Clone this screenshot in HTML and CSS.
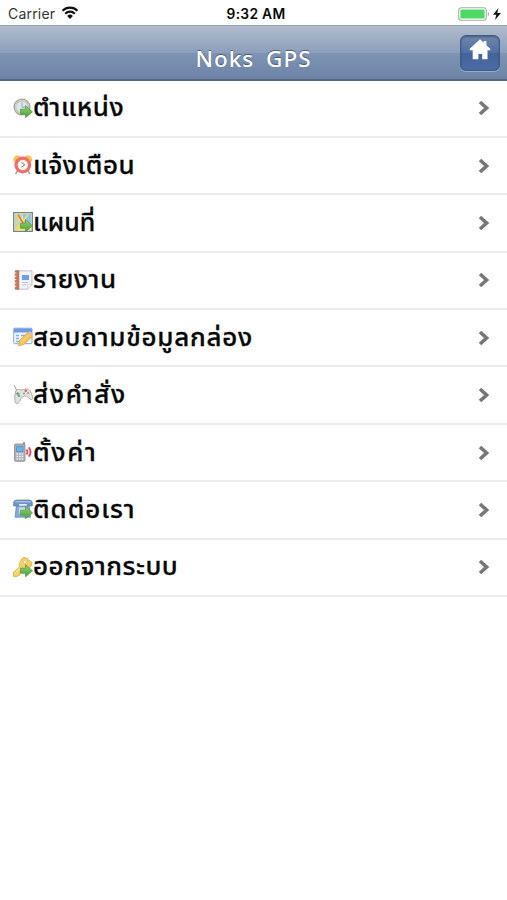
FILE: index.html
```html
<!DOCTYPE html>
<html lang="th">

<head>
    <meta charset="UTF-8" />
    <meta name="viewport" content="width=device-width, initial-scale=1.0" />
    <title>Noks GPS</title>
    <link rel="stylesheet" href="styles.css">
</head>

<body>
    <!-- Green arrow shared by several icons -->
    <svg class="defs" width="0" height="0">
        <defs>
            <linearGradient id="green" x1="0" y1="0" x2="0" y2="1">
                <stop offset="0" stop-color="#91d36f" />
                <stop offset="1" stop-color="#49a13d" />
            </linearGradient>
            <path id="arrow" d="M7.5 11.2h5V7.5l7 6.3-7 6v-3.5h-5z" fill="url(#green)" stroke="#55943d" stroke-width=".7" />
        </defs>
    </svg>

    <div class="status-bar">
        <div class="carrier">
            <span>Carrier</span>
            <svg width="18" height="14" viewBox="0 0 18 14">
                <path d="M1.5 4.8a10.6 10.6 0 0 1 15 0M4.2 7.7a6.8 6.8 0 0 1 9.6 0" fill="none" stroke="#111" stroke-width="2.2" />
                <path d="M9 13L6.1 9.9a4.2 4.2 0 0 1 5.8 0z" fill="#111" />
            </svg>
        </div>
        <span class="time">9:32 AM</span>
        <div class="power">
            <svg width="44" height="14" viewBox="0 0 44 14">
                <rect x=".7" y=".7" width="27.6" height="12.6" rx="2.8" fill="#fff" stroke="#aaa" stroke-width="1.1" />
                <rect x="2.4" y="2.4" width="24.2" height="9.2" rx="1.3" fill="#4cd964" />
                <path d="M29.8 4.7c1.7.8 1.7 3.8 0 4.6z" fill="#aaa" />
                <path d="M40.5 1L35 7.7h3.3L37 13l6-7h-3.7z" fill="#111" />
            </svg>
        </div>
    </div>

    <header class="toolbar">
        <h1>Noks GPS</h1>
        <a href="#" class="home-btn" aria-label="Home">
            <svg width="22" height="22" viewBox="0 0 22 22">
                <path d="M11 .3l3.8 3.5V2h2.6v4.2l3.8 3.5v1.5h-2.7v9H13.2V15H9.4v5.2H3.7v-9H.8V9.7z" fill="#fff" />
            </svg>
        </a>
    </header>

    <ul class="menu">
        <li><a href="#">
            <svg class="icon" viewBox="0 0 20 20">
                <circle cx="9" cy="9" r="7.9" fill="#eaf0f6" stroke="#a2a4b5" stroke-width="1.4" />
                <circle cx="9" cy="9" r="6.3" fill="#d8e7f4" stroke="#d6c18d" stroke-width="1.2" />
                <path d="M9 4v5.2h4" fill="none" stroke="#9eabba" />
                <use href="#arrow" />
            </svg>
            <span class="label">ตำแหน่ง</span>
            <svg class="chevron" viewBox="0 0 12 16"><path d="M2 2l6.6 6L2 14" /></svg>
        </a></li>
        <li><a href="#">
            <svg class="icon" viewBox="0 0 20 20">
                <path d="M4.5 16l-2 3M15 16l2 3" stroke="#a5a0a0" stroke-width="1.5" />
                <path d="M.7 5.2C.8 1 4 0 7 1.3L2 7zM19 5.2C18.8 1 15.5 0 12.6 1.3L17.6 7z" fill="#fcc54b" stroke="#efaa55" stroke-width=".6" />
                <circle cx="9.8" cy="10" r="6.8" fill="#fff5ef" stroke="#ee6f68" stroke-width="3.3" />
                <path d="M8.5 7.5l3.3 2.3-3.3 2.5" fill="none" stroke="#777" />
            </svg>
            <span class="label">แจ้งเตือน</span>
            <svg class="chevron" viewBox="0 0 12 16"><path d="M2 2l6.6 6L2 14" /></svg>
        </a></li>
        <li><a href="#">
            <svg class="icon" viewBox="0 0 20 20">
                <path d="M.7.7h18.6v18.6H.7z" fill="#eef1d8" stroke="#778578" stroke-width="1.3" />
                <path d="M2 2h8l-2 8-6 8z" fill="#c2d7b5" />
                <path d="M10 2h8v11h-8z" fill="#8dc5ee" />
                <path d="M2 18l7-8 9 8z" fill="#f4df76" />
                <path d="M4 2.5l5.5 9M15 3L3 17.5" stroke="#f5d85d" stroke-width="2" />
                <path d="M5 2.5l5 8.5" stroke="#ed7645" stroke-width="1.5" />
                <use href="#arrow" />
            </svg>
            <span class="label">แผนที่</span>
            <svg class="chevron" viewBox="0 0 12 16"><path d="M2 2l6.6 6L2 14" /></svg>
        </a></li>
        <li><a href="#">
            <svg class="icon" viewBox="0 0 20 20">
                <path d="M4 .8h15v13.7l-4.5 4.7H4z" fill="#f0f3fa" stroke="#bfc1cc" />
                <path d="M2.2.7h3.6v18.6H2.2z" fill="#c87755" stroke="#a86851" stroke-width=".7" />
                <path d="M1.3 3h2M1.3 6.3h2M1.3 9.6h2M1.3 13h2M1.3 16.3h2" stroke="#eee" />
                <path d="M9 5h7v5H9z" fill="#6f9ee2" />
                <path d="M9 12.5h6M9 15h4" stroke="#b9c7e2" />
                <path d="M14.5 19v-4.5H19z" fill="#fff" stroke="#c5c5cc" stroke-width=".7" />
            </svg>
            <span class="label">รายงาน</span>
            <svg class="chevron" viewBox="0 0 12 16"><path d="M2 2l6.6 6L2 14" /></svg>
        </a></li>
        <li><a href="#">
            <svg class="icon" viewBox="0 0 20 20">
                <rect x=".7" y="1.2" width="18.3" height="15.5" rx="1" fill="#edf5ff" stroke="#86abd9" />
                <path d="M1 1.5h18v4H1z" fill="#6d9be0" />
                <path d="M3 8.5h3M8 8.5h7M3 11.5h3M8 11.5h5M3 14.5h3" stroke="#86b1e5" stroke-width="1.5" />
                <path d="M5.5 18.8l1.2-5.6 8.3-7.7 4.2 4.2-8.4 7.8z" fill="#f8c551" stroke="#d79844" stroke-width=".7" />
                <path d="M15 5.5l1.6-1.2 3.2 3.2-.6 2.2z" fill="#e9b8a1" />
                <path d="M8.5 15l8-7.3" stroke="#ffe38b" />
            </svg>
            <span class="label">สอบถามข้อมูลกล่อง</span>
            <svg class="chevron" viewBox="0 0 12 16"><path d="M2 2l6.6 6L2 14" /></svg>
        </a></li>
        <li><a href="#">
            <svg class="icon" viewBox="0 0 20 20">
                <path d="M1 0l3 6" stroke="#999" fill="none" />
                <path d="M3 5.5c2-2 3.5-.5 5-.6 3-.2 6-2 8.3 0 2 1.7 4.4 8.3 2.9 9.5-2 1.4-4-3.1-6-3.3-2-.1-3.4.6-5 1.4-.8 2.8-2 6-4.5 6-2.8-.2-2-9.8-.7-13z" fill="#e2e2e2" stroke="#a4a4a4" stroke-width=".9" />
                <path d="M4.8 7v3.5M3 8.8h3.6" stroke="#888" stroke-width="1.1" />
                <circle cx="6" cy="10.8" r="1.2" fill="#54b85b" />
                <circle cx="12.8" cy="5.8" r="1.3" fill="#e75e5e" />
                <circle cx="15.2" cy="8.2" r="1.1" fill="#e48282" />
                <circle cx="11" cy="8.5" r="1" fill="#69b875" />
            </svg>
            <span class="label">ส่งคำสั่ง</span>
            <svg class="chevron" viewBox="0 0 12 16"><path d="M2 2l6.6 6L2 14" /></svg>
        </a></li>
        <li><a href="#">
            <svg class="icon" viewBox="0 0 20 20">
                <path d="M11 .3v5" stroke="#777" stroke-width="1.7" />
                <rect x="1.5" y="2" width="10.5" height="17.3" rx="1" fill="#abb0b6" stroke="#85898f" stroke-width=".8" />
                <path d="M3.5 4.5H10v5H3.5z" fill="#5eb8ef" stroke="#4387bf" stroke-width=".6" />
                <path d="M3.4 12h7M3.4 14.5h7M3.4 17h7" stroke="#edf0f2" stroke-width="1.3" stroke-dasharray="1.7 .9" />
                <path d="M13.5 7.5q2 2.5 0 5M15.7 5.4q3.8 4.6 0 9.2" fill="none" stroke="#e7465c" stroke-width="1.8" />
            </svg>
            <span class="label">ตั้งค่า</span>
            <svg class="chevron" viewBox="0 0 12 16"><path d="M2 2l6.6 6L2 14" /></svg>
        </a></li>
        <li><a href="#">
            <svg class="icon" viewBox="0 0 20 20">
                <path d="M3.4 7h12.8l1.4 11.2H2z" fill="#86add6" stroke="#698eb7" stroke-width=".8" />
                <path d="M.6 7V3.5Q1 1 4 1h12q3 .2 3.3 2.5V7h-5V4.7H5.5V7z" fill="#7096c8" stroke="#557bad" stroke-width=".7" />
                <path d="M2.5 2.8h15" stroke="#b7d3ee" />
                <path d="M6 8.5h7v6H6z" fill="#c9dff1" />
                <use href="#arrow" />
            </svg>
            <span class="label">ติดต่อเรา</span>
            <svg class="chevron" viewBox="0 0 12 16"><path d="M2 2l6.6 6L2 14" /></svg>
        </a></li>
        <li><a href="#">
            <svg class="icon" viewBox="0 0 20 20">
                <path d="M9.5 1q2.5-1.3 5 .8l3.6 3.2q2 2 0 4.3l-3.4 3.4q-2 1.3-4.2-.3L7 16l-.2 2.2-2.2.2-.4 1.3H.6v-4.5l6-5.4q-.8-2.4.3-4.3z" fill="#f5d267" stroke="#dbad4a" stroke-width=".9" />
                <circle cx="12" cy="5" r="1.8" fill="#fff5d1" stroke="#dcb75c" stroke-width=".6" />
                <path d="M2 16.5l6-6" stroke="#fff0a9" />
                <use href="#arrow" />
            </svg>
            <span class="label">ออกจากระบบ</span>
            <svg class="chevron" viewBox="0 0 12 16"><path d="M2 2l6.6 6L2 14" /></svg>
        </a></li>
    </ul>
</body>

</html>
```
FILE: styles.css
```css
* {
    margin: 0;
    padding: 0;
    box-sizing: border-box;
}

body {
    background-color: #fff;
    color: #080808;
    font-family: "Noto Sans Thai", "Noto Sans", sans-serif;
    min-height: 100vh;
}

.defs {
    display: block;
}

.status-bar {
    display: grid;
    grid-template-columns: 1fr auto 1fr;
    align-items: center;
    height: 25px;
    padding: 2px 5px 0 8px;
    font-family: Inter, sans-serif;
    font-size: 14px;
    line-height: 20px;
}

.carrier {
    display: flex;
    align-items: center;
    gap: 6px;
    color: #333;
    letter-spacing: 0.2px;
}

.carrier svg {
    margin-top: -1px;
}

.time {
    padding-left: 2px;
    font-size: 13.8px;
    font-weight: 600;
    letter-spacing: 0.3px;
}

.power {
    display: flex;
    justify-content: flex-end;
}

/* Header */
.toolbar {
    display: grid;
    grid-template-columns: 1fr auto 1fr;
    align-items: center;
    height: 55.5px;
    padding: 0 7px;
    background: linear-gradient(#b0bccd, #8c9fbb 50%, #7e94b4 51%, #6d84a8);
    border-top: 1px solid #929fae;
    border-bottom: 2px solid #56677e;
}

.toolbar h1 {
    grid-column: 2;
    padding-top: 13px;
    color: #fff;
    font-family: "Noto Sans", sans-serif;
    font-size: 22.5px;
    font-weight: 500;
    line-height: 30px;
    letter-spacing: 1px;
    word-spacing: 5px;
    text-shadow: 0 -1px 1px rgba(0, 0, 0, 0.4);
}

.home-btn {
    display: flex;
    justify-content: center;
    justify-self: end;
    width: 40px;
    height: 36px;
    margin-top: 1px;
    padding-top: 3px;
    border: 1px solid #405b86;
    border-radius: 6px;
    background: linear-gradient(#7087ac, #506fa2 49%, #42649b 50%, #4a6ca3);
    box-shadow: 0 1px 0 rgba(255, 255, 255, 0.3), inset 0 1px 2px rgba(30, 50, 85, 0.5);
}

/* Menu */
.menu {
    list-style: none;
}

.menu li {
    height: 57.4px;
    border-bottom: 2px solid #ebebeb;
}

.menu a {
    display: flex;
    align-items: center;
    height: 100%;
    padding: 0 17px 0 13px;
    color: #080808;
    text-decoration: none;
}

.icon {
    flex: none;
    width: 20px;
    height: 20px;
    margin-top: -1px;
}

.label {
    padding-top: 2px;
    font-size: 24px;
    font-weight: 500;
    line-height: 40px;
    letter-spacing: 0.5px;
    white-space: nowrap;
    transform: scaleX(1.08);
    transform-origin: left center;
    -webkit-text-stroke: 0.3px #080808;
}

.menu li:nth-child(3) .label {
    letter-spacing: 0;
    transform: scaleX(1.04);
}

.menu li:nth-child(5) .label {
    letter-spacing: 0.7px;
}

.menu li:nth-child(6) .label,
.menu li:nth-child(7) .label {
    letter-spacing: 1.6px;
}

.menu li:nth-child(8) .label {
    letter-spacing: 0.9px;
}

.chevron {
    width: 12px;
    height: 16px;
    margin-left: auto;
}

.chevron path {
    fill: none;
    stroke: #777;
    stroke-width: 3.6;
}
```
